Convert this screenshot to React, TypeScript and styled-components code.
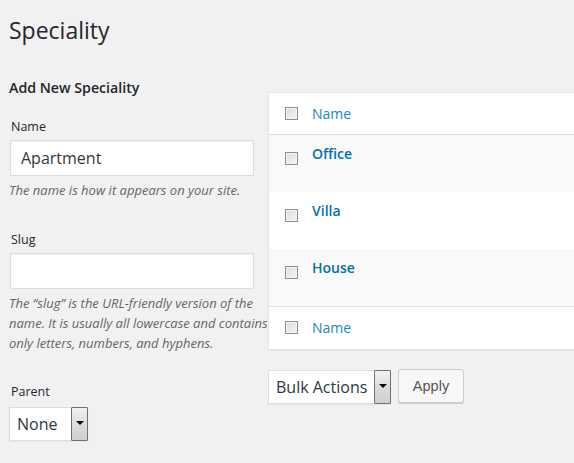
import React from "react";
import styled, { createGlobalStyle } from "styled-components";

const Global = createGlobalStyle`
  html, body { margin: 0; padding: 0; background: #f1f1f1; overflow: hidden; }
  body { font-family: "Open Sans", "Noto Sans", sans-serif; color: #23282d; }
  * { box-sizing: border-box; }
`;

const Page = styled.div`
  padding: 14px 0 0 9px;
  width: 574px;
  height: 463px;
  overflow: hidden;
`;

const Title = styled.h1`
  margin: 0;
  font-size: 23px;
  font-weight: 400;
  line-height: 32px;
  color: #23282d;
`;

const Columns = styled.div`
  display: flex;
  align-items: flex-start;
  margin-top: 32px;
`;

const FormCol = styled.div`
  width: 259px;
  flex: none;
`;

const FormHeading = styled.h2`
  margin: 0 0 20px;
  font-size: 14.2px;
  font-weight: 600;
  line-height: 20px;
`;

const Field = styled.div<{ $gap?: number }>`
  margin-bottom: ${(p) => p.$gap ?? 0}px;
`;

const Label = styled.label<{ $space?: number }>`
  display: block;
  padding-left: 2px;
  font-size: 12.5px;
  line-height: 18px;
  margin-bottom: ${(p) => p.$space ?? 4}px;
`;

const TextInput = styled.div`
  margin-left: 1px;
  width: 244px;
  height: 36px;
  background: #fff;
  border: 1px solid #ddd;
  box-shadow: inset 0 1px 2px rgba(0, 0, 0, 0.07);
  padding: 0 10px;
  font-size: 16px;
  line-height: 34px;
  color: #32373c;
`;

const Desc = styled.p`
  margin: 4px -4px 0 0;
  font-size: 13px;
  font-style: italic;
  line-height: 20px;
  color: #666;
`;

const SelectBox = styled.div<{ $width: number }>`
  display: inline-flex;
  align-items: stretch;
  width: ${(p) => p.$width}px;
  height: 34px;
  background: #fff;
  border: 1px solid #ddd;
  box-shadow: 0 1px 1px rgba(0, 0, 0, 0.04);
`;

const SelectValue = styled.span`
  flex: 1;
  padding-left: 7px;
  font-size: 16px;
  line-height: 32px;
  color: #32373c;
  white-space: nowrap;
`;

const SelectArrow = styled.span`
  width: 17px;
  margin: -1px -1px -1px 0;
  border: 1px solid #707070;
  border-radius: 1px;
  background: linear-gradient(#f2f2f2, #dcdcdc 50%, #cfcfcf);
  display: flex;
  align-items: center;
  justify-content: center;
  &::after {
    content: "";
    border-left: 4px solid transparent;
    border-right: 4px solid transparent;
    border-top: 4px solid #000;
    margin-top: -2px;
  }
`;

const ListCol = styled.div`
  flex: none;
  width: 330px;
  margin-top: 14px;
`;

const Table = styled.div`
  background: #fff;
  border: 1px solid #e5e5e5;
  border-right: none;
  box-shadow: 0 1px 1px rgba(0, 0, 0, 0.04);
`;

const Row = styled.div<{ $kind: "head" | "foot" | "even" | "odd" }>`
  display: flex;
  align-items: flex-start;
  height: ${(p) => (p.$kind === "head" ? 42 : p.$kind === "foot" ? 43 : 57)}px;
  padding-top: ${(p) => (p.$kind === "head" || p.$kind === "foot" ? 10 : 8)}px;
  background: ${(p) => (p.$kind === "odd" ? "#f9f9f9" : "#fff")};
  border-bottom: ${(p) => (p.$kind === "head" ? "1px solid #e1e1e1" : "none")};
  border-top: ${(p) => (p.$kind === "foot" ? "1px solid #e1e1e1" : "none")};
`;

const CheckCell = styled.div<{ $offset: number }>`
  width: 43px;
  flex: none;
  padding-left: 16px;
  padding-top: ${(p) => p.$offset}px;
`;

const Check = styled.span`
  display: block;
  width: 13px;
  height: 13px;
  border: 1px solid #8f8f8f;
  background: linear-gradient(135deg, #dcdcdc, #f6f6f6);
  box-shadow: inset 0 0 0 1px #f4f4f4;
`;

const NameLink = styled.a<{ $bold?: boolean }>`
  font-size: 14px;
  line-height: 22px;
  font-weight: ${(p) => (p.$bold ? 600 : 400)};
  color: ${(p) => (p.$bold ? "#0073aa" : "#2388ba")};
  text-decoration: none;
`;

const Actions = styled.div`
  display: flex;
  gap: 7px;
  margin-top: 20px;
`;

const Button = styled.button`
  height: 34px;
  padding: 0;
  width: 66px;
  margin-top: -1px;
  font-family: "Liberation Sans", Arial, sans-serif;
  font-size: 14.5px;
  color: #555;
  background: #f7f7f7;
  border: 1px solid #ccc;
  border-radius: 3px;
  box-shadow: 0 1px 0 #ccc;
`;

const rows = ["Office", "Villa", "House"];

export default function App() {
  return (
    <Page>
      <Global />
      <Title>Speciality</Title>
      <Columns>
        <FormCol>
          <FormHeading>Add New Speciality</FormHeading>
          <Field $gap={31}>
            <Label>Name</Label>
            <TextInput>Apartment</TextInput>
            <Desc>The name is how it appears on your site.</Desc>
          </Field>
          <Field $gap={30}>
            <Label>Slug</Label>
            <TextInput />
            <Desc>
              The “slug” is the URL-friendly version of the name. It is usually
              all lowercase and contains only letters, numbers, and hyphens.
            </Desc>
          </Field>
          <Field>
            <Label $space={6}>Parent</Label>
            <SelectBox $width={79}>
              <SelectValue>None</SelectValue>
              <SelectArrow />
            </SelectBox>
          </Field>
        </FormCol>
        <ListCol>
          <Table>
            <Row $kind="head">
              <CheckCell $offset={4}>
                <Check />
              </CheckCell>
              <NameLink>Name</NameLink>
            </Row>
            {rows.map((r, i) => (
              <Row key={r} $kind={i % 2 === 0 ? "odd" : "even"}>
                <CheckCell $offset={9}>
                  <Check />
                </CheckCell>
                <NameLink $bold>{r}</NameLink>
              </Row>
            ))}
            <Row $kind="foot">
              <CheckCell $offset={4}>
                <Check />
              </CheckCell>
              <NameLink>Name</NameLink>
            </Row>
          </Table>
          <Actions>
            <SelectBox $width={123}>
              <SelectValue>Bulk Actions</SelectValue>
              <SelectArrow />
            </SelectBox>
            <Button>Apply</Button>
          </Actions>
        </ListCol>
      </Columns>
    </Page>
  );
}
